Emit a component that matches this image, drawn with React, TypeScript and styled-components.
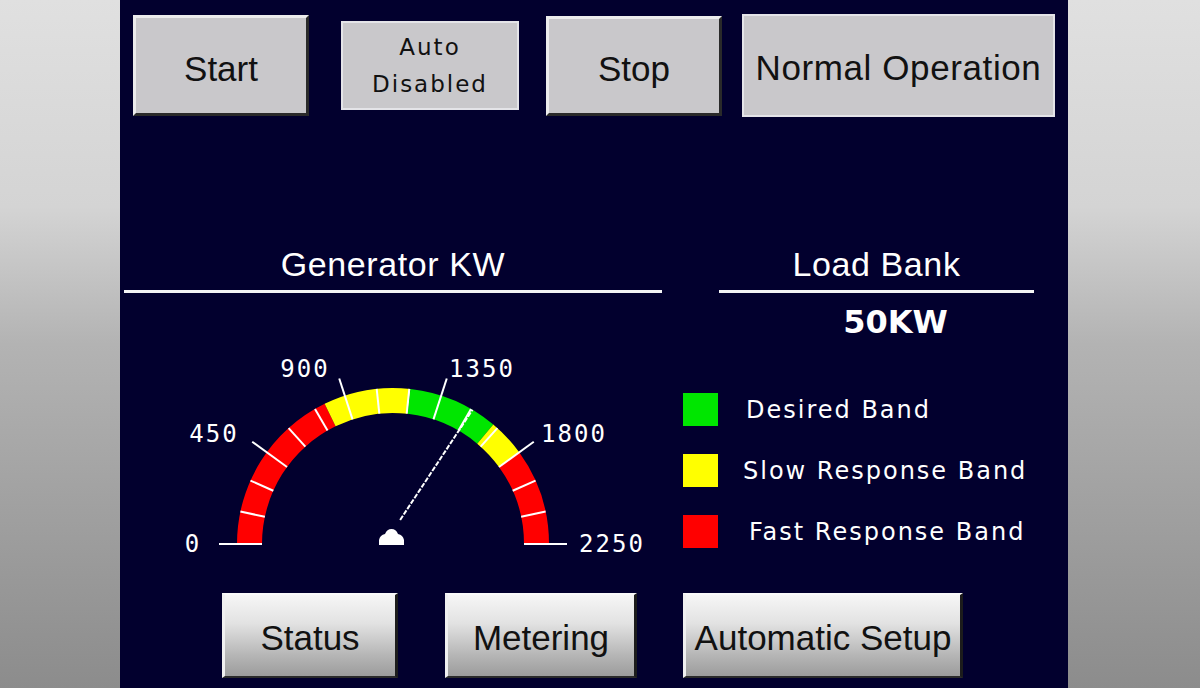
import React from 'react';
import styled, { createGlobalStyle } from 'styled-components';

const CX = 393;
const CY = 543;
const R_OUT = 156;
const R_IN = 131;
const MAX = 2250;

const toAngle = (v: number) => Math.PI - (v / MAX) * Math.PI;
const pt = (v: number, r: number) => {
  const a = toAngle(v);
  return { x: CX + r * Math.cos(a), y: CY - r * Math.sin(a) };
};

const bandPath = (from: number, to: number) => {
  const a = pt(from, R_OUT);
  const b = pt(to, R_OUT);
  const c = pt(to, R_IN);
  const d = pt(from, R_IN);
  return `M${a.x},${a.y} A${R_OUT},${R_OUT} 0 0 1 ${b.x},${b.y} L${c.x},${c.y} A${R_IN},${R_IN} 0 0 0 ${d.x},${d.y} Z`;
};

const bands = [
  { from: 0, to: 800, color: '#ff0000' },
  { from: 800, to: 1205, color: '#ffff00' },
  { from: 1205, to: 1625, color: '#00e600' },
  { from: 1625, to: 1800, color: '#ffff00' },
  { from: 1800, to: 2250, color: '#ff0000' },
];

const labels = [
  { text: '0', x: 193, y: 543 },
  { text: '450', x: 214, y: 433 },
  { text: '900', x: 305, y: 368 },
  { text: '1350', x: 482, y: 368 },
  { text: '1800', x: 574, y: 433 },
  { text: '2250', x: 612, y: 543 },
];

const legend = [
  { color: '#00e600', text: 'Desired Band', indent: 28 },
  { color: '#ffff00', text: 'Slow Response Band', indent: 25 },
  { color: '#ff0000', text: 'Fast Response Band', indent: 31 },
];

const Gauge: React.FC<{ value: number }> = ({ value }) => {
  const ticks: number[] = [];
  for (let v = 0; v <= MAX; v += 150) ticks.push(v);
  const tip = pt(value, R_OUT);
  const base = pt(value, 14);
  return (
    <GaugeSvg viewBox="124 340 538 220" width={538} height={220}>
      {bands.map((b) => (
        <path key={b.from} d={bandPath(b.from, b.to)} fill={b.color} />
      ))}
      {ticks.map((v) => {
        const major = v % 450 === 0;
        const a = pt(v, R_IN);
        const b = pt(v, major ? 174 : R_OUT);
        return (
          <line
            key={v}
            x1={a.x}
            y1={a.y}
            x2={b.x}
            y2={b.y}
            stroke="#fff"
            strokeWidth={2}
          />
        );
      })}
      {labels.map((l) => (
        <GaugeLabel key={l.text} x={l.x} y={l.y} textAnchor="middle" dominantBaseline="central">
          {l.text}
        </GaugeLabel>
      ))}
      <line
        x1={base.x}
        y1={base.y - 12}
        x2={tip.x}
        y2={tip.y}
        stroke="#fff"
        strokeWidth={2}
        strokeDasharray="5 1.5"
      />
      <path
        d="M379,544 L379,539 Q380,534 385,533 Q387,528 391.5,528 Q396,528 398,533 Q403,534 404,539 L404,544 Z"
        fill="#fff"
      />
    </GaugeSvg>
  );
};

const HmiScreen: React.FunctionComponent = () => {
  return (
    <>
      <GlobalStyle />
      <Page>
        <Panel>
          <TopRow>
            <BevelButton $w={176} $h={101}>Start</BevelButton>
            <FlatButton $w={178} $h={89} $ml={32} $small>
              <span>Auto</span>
              <span>Disabled</span>
            </FlatButton>
            <BevelButton $w={176} $h={100} $ml={27}>Stop</BevelButton>
            <FlatButton $w={313} $h={103} $ml={20}>Normal Operation</FlatButton>
          </TopRow>

          <Middle>
            <LeftCol>
              <Header $w={538}>Generator KW</Header>
              <Gauge value={1508} />
            </LeftCol>
            <RightCol>
              <Header $w={315}>Load Bank</Header>
              <Reading>50KW</Reading>
              <Legend>
                {legend.map((l) => (
                  <LegendRow key={l.text}>
                    <Swatch $color={l.color} />
                    <LegendText $indent={l.indent}>{l.text}</LegendText>
                  </LegendRow>
                ))}
              </Legend>
            </RightCol>
          </Middle>

          <BottomRow>
            <GlossButton $w={176}>Status</GlossButton>
            <GlossButton $w={192} $ml={47}>Metering</GlossButton>
            <GlossButton $w={280} $ml={46}>Automatic Setup</GlossButton>
          </BottomRow>
        </Panel>
      </Page>
    </>
  );
};

const GlobalStyle = createGlobalStyle`
body {
  margin: 0;
  overflow: hidden;
  font-family: 'Liberation Sans', Arial, sans-serif;
  background: linear-gradient(#e0e0e0 0%, #d4d4d4 30%, #b3b3b3 50%, #8c8c8c 100%);
}
`;

const Page = styled.div`
  width: 1200px;
  height: 688px;
  display: flex;
`;

const Panel = styled.div`
  margin-left: 120px;
  width: 948px;
  height: 688px;
  background: #02002e;
  display: flex;
  flex-direction: column;
`;

const TopRow = styled.div`
  display: flex;
  align-items: center;
  height: 103px;
  margin-top: 14px;
  padding-left: 13px;
`;

const BaseButton = styled.div<{ $w: number; $h?: number; $ml?: number }>`
  box-sizing: border-box;
  width: ${(p) => p.$w}px;
  height: ${(p) => p.$h ?? 85}px;
  margin-left: ${(p) => p.$ml ?? 0}px;
  display: flex;
  align-items: center;
  justify-content: center;
  color: #111;
  font-size: 35px;
  white-space: nowrap;
`;

const BevelButton = styled(BaseButton)`
  background: #c9c8cb;
  border-top: 3px solid #ececec;
  border-left: 3px solid #ececec;
  border-right: 3px solid #2a2a2a;
  border-bottom: 3px solid #2a2a2a;
  padding-top: 7px;
`;

const FlatButton = styled(BaseButton)<{ $small?: boolean }>`
  background: #c9c8cb;
  border: 2px solid #e4e4e8;
  flex-direction: column;
  font-family: ${(p) => (p.$small ? "'DejaVu Sans', sans-serif" : "'Liberation Sans', Arial, sans-serif")};
  font-size: ${(p) => (p.$small ? '23px' : '35px')};
  letter-spacing: ${(p) => (p.$small ? '2px' : '0.6px')};
  line-height: ${(p) => (p.$small ? '37px' : 'normal')};
  padding-top: ${(p) => (p.$small ? '0' : '4px')};
`;

const Middle = styled.div`
  display: flex;
  padding-left: 4px;
  margin-top: 125px;
`;

const LeftCol = styled.div`
  display: flex;
  flex-direction: column;
  width: 538px;
`;

const RightCol = styled.div`
  display: flex;
  flex-direction: column;
  margin-left: 57px;
  width: 315px;
`;

const Header = styled.div<{ $w: number }>`
  width: ${(p) => p.$w}px;
  height: 48px;
  color: #fff;
  font-size: 34px;
  letter-spacing: 0.6px;
  text-align: center;
  line-height: 44px;
  border-bottom: 3px solid #f4f4f4;
`;

const GaugeSvg = styled.svg`
  display: block;
  margin-top: 48px;
`;

const GaugeLabel = styled.text`
  fill: #fff;
  font-family: 'DejaVu Sans Mono', monospace;
  font-size: 24px;
  letter-spacing: 2px;
`;

const Reading = styled.div`
  color: #fff;
  font-family: 'DejaVu Sans', sans-serif;
  font-weight: bold;
  font-size: 32px;
  text-align: center;
  padding-left: 38px;
  margin-top: 9px;
  line-height: 40px;
`;

const Legend = styled.div`
  display: flex;
  flex-direction: column;
  gap: 28px;
  margin-top: 51px;
  margin-left: -36px;
`;

const LegendRow = styled.div`
  display: flex;
  align-items: center;
  height: 33px;
`;

const Swatch = styled.div<{ $color: string }>`
  width: 35px;
  height: 33px;
  background: ${(p) => p.$color};
`;

const LegendText = styled.span<{ $indent: number }>`
  margin-left: ${(p) => p.$indent}px;
  color: #fff;
  font-family: 'DejaVu Sans', sans-serif;
  font-size: 24px;
  letter-spacing: 2px;
  white-space: nowrap;
`;

const BottomRow = styled.div`
  display: flex;
  margin-top: auto;
  margin-bottom: 10px;
  padding-left: 102px;
`;

const GlossButton = styled(BaseButton)`
  height: 85px;
  background: linear-gradient(#f6f6f6 0%, #e2e2e2 35%, #b5b5b5 75%, #9c9c9c 100%);
  border-top: 2px solid #fafafa;
  border-left: 3px solid #f0f0f0;
  border-right: 3px solid #1c1c1c;
  border-bottom: 2px solid #2a2a2a;
  padding-top: 5px;
`;

export default HmiScreen;
